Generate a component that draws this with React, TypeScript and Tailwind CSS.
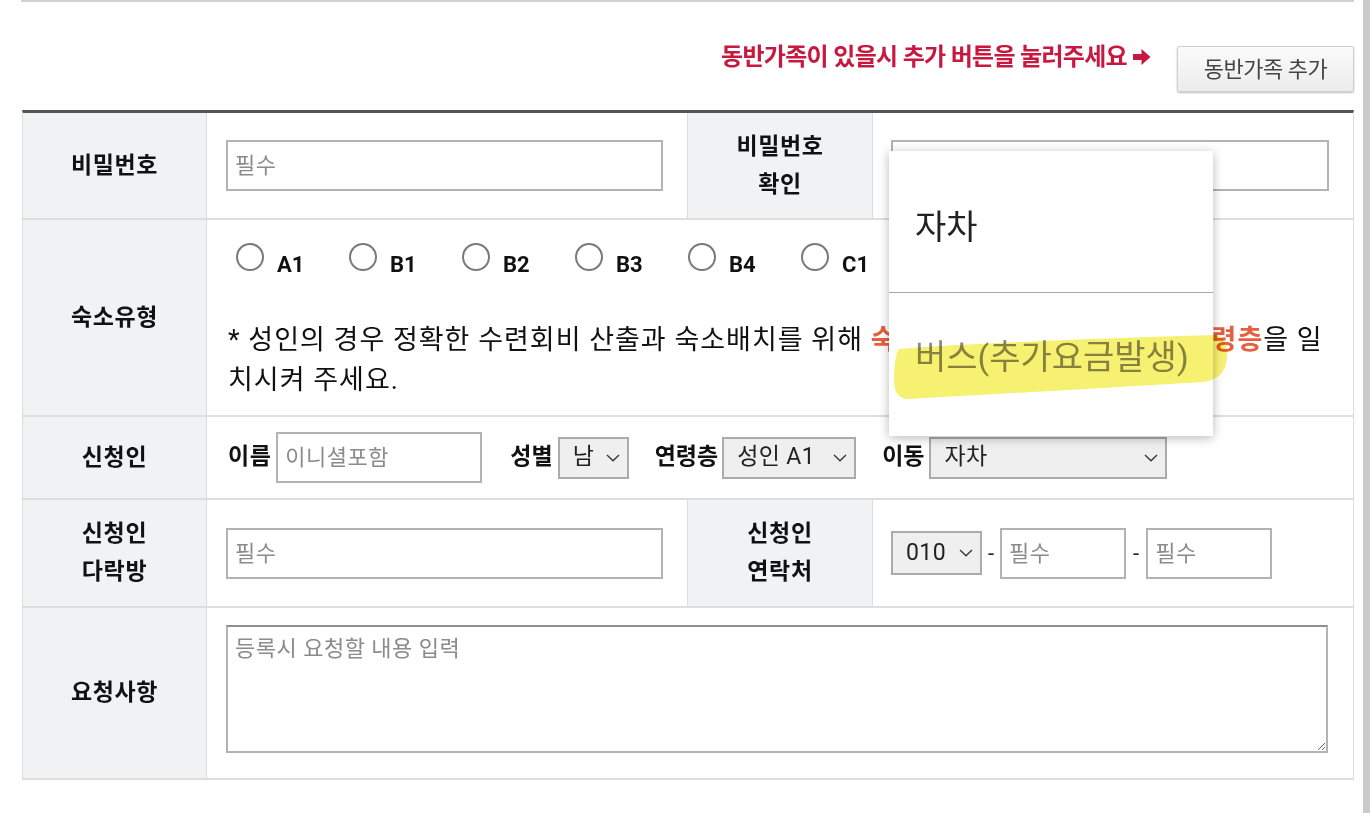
import React from "react"

const font = { fontFamily: "Roboto, 'Noto Sans CJK KR', sans-serif" }

const Chevron = () => (
  <svg width="14" height="8" viewBox="0 0 14 8" className="shrink-0">
    <polyline points="1,1 7,6.8 13,1" fill="none" stroke="#333" strokeWidth="1.3" />
  </svg>
)

const Select = ({ value, className }: { value: string; className: string }) => (
  <div className={`flex items-center justify-between border-2 border-[#ababab] bg-[#efefef] pl-[13px] pr-[7px] text-[23px] tracking-[0.4px] text-[#222] ${className}`}>
    <span>{value}</span>
    <Chevron />
  </div>
)

const Field = ({ placeholder, className }: { placeholder: string; className: string }) => (
  <input
    readOnly
    placeholder={placeholder}
    className={`border-2 border-[#b3b3b3] bg-white px-[7px] text-[22px] tracking-[0.5px] text-[#222] outline-none placeholder:text-[#8b8b8b] ${className}`}
  />
)

const Label = ({ children }: { children: React.ReactNode }) => (
  <div className="flex items-center justify-center border-r border-[#dcdcdc] bg-[#f1f2f4] text-center text-[23px] font-bold leading-[38px] tracking-[0.6px] text-[#111]">
    <div>{children}</div>
  </div>
)

const Radio = ({ label }: { label: string }) => (
  <div className="flex w-[113px] items-end">
    <span className="h-[28px] w-[28px] shrink-0 rounded-full border-2 border-[#7a7a7a] bg-white" />
    <span className="relative top-[5px] ml-[13px] text-[22px] font-bold leading-[22px] text-[#111]">{label}</span>
  </div>
)

export default function App() {
  return (
    <div className="relative flex h-[813px] w-[1370px] overflow-hidden bg-white" style={font}>
      <div className="flex-1">
        <div className="ml-[21px] h-[2px] w-[1333px] bg-[#d2d2d2]" />

        {/* top bar */}
        <div className="ml-[22px] flex h-[108px] w-[1332px] items-start justify-end">
          <div className="mt-[41px] flex items-center text-[24px] font-bold leading-[28px] tracking-[-0.7px] text-[#c8183f]">
            동반가족이 있을시 추가 버튼을 눌러주세요
            <svg width="18" height="18" viewBox="0 0 18 18" className="ml-[6px] shrink-0">
              <path d="M0 6 H8.5 V1 L17.5 9 L8.5 17 V12 H0 Z" fill="#c8183f" />
            </svg>
          </div>
          <button className="ml-[26px] mt-[44px] h-[46px] w-[177px] rounded-[2px] border border-[#cfcfcf] bg-gradient-to-b from-[#fbfbfb] to-[#ececec] text-[22px] tracking-[-0.5px] text-[#444] shadow-[0_1px_2px_rgba(0,0,0,0.25)]">
            동반가족 추가
          </button>
        </div>

        {/* form table */}
        <div className="ml-[22px] w-[1332px] border-t-[3px] border-l border-r border-[#dcdcdc] border-t-[#555]">
          <div className="grid h-[107px] grid-cols-[184px_481px_185px_480px] border-b-2 border-[#dedede]">
            <Label>비밀번호</Label>
            <div className="flex items-center border-r border-[#dcdcdc] pl-[19px]">
              <Field placeholder="필수" className="h-[51px] w-[437px]" />
            </div>
            <Label>
              비밀번호
              <br />
              확인
            </Label>
            <div className="flex items-center pl-[18px]">
              <Field placeholder="" className="h-[51px] w-[438px]" />
            </div>
          </div>

          <div className="grid h-[197px] grid-cols-[184px_1146px] border-b-2 border-[#dedede]">
            <Label>숙소유형</Label>
            <div className="pl-[21px] pr-[20px] pt-[23px]">
              <div className="flex h-[28px] pl-[8px]">
                {["A1", "B1", "B2", "B3", "B4", "C1"].map((r) => (
                  <Radio key={r} label={r} />
                ))}
              </div>
              <p className="mt-[49px] text-[27px] leading-[40px] tracking-[1px] text-[#111]">
                * 성인의 경우 정확한 수련회비 산출과 숙소배치를 위해{" "}
                <span className="font-bold text-[#e5603f]">숙박자 전원의 실제 성별과 연령층</span>을 일치시켜 주세요.
              </p>
            </div>
          </div>

          <div className="grid h-[83px] grid-cols-[184px_1146px] border-b-2 border-[#dedede]">
            <Label>신청인</Label>
            <div className="flex items-center pl-[21px] text-[23px] font-bold text-[#111]">
              <span className="tracking-[0.5px]">이름</span>
              <Field placeholder="이니셜포함" className="ml-[5px] h-[51px] w-[206px] font-normal" />
              <span className="ml-[28px]">성별</span>
              <Select value="남" className="ml-[5px] h-[42px] w-[71px] font-normal" />
              <span className="ml-[26px]">연령층</span>
              <Select value="성인 A1" className="ml-[4px] h-[42px] w-[134px] font-normal" />
              <span className="ml-[26px]">이동</span>
              <Select value="자차" className="ml-[5px] h-[42px] w-[238px] font-normal" />
            </div>
          </div>

          <div className="grid h-[108px] grid-cols-[184px_481px_185px_480px] border-b-2 border-[#dedede]">
            <Label>
              신청인
              <br />
              다락방
            </Label>
            <div className="flex items-center border-r border-[#dcdcdc] pl-[19px]">
              <Field placeholder="필수" className="h-[51px] w-[437px]" />
            </div>
            <Label>
              신청인
              <br />
              연락처
            </Label>
            <div className="flex items-center pl-[18px] text-[22px] text-[#222]">
              <Select value="010" className="h-[44px] w-[91px]" />
              <span className="mx-[6px]">-</span>
              <Field placeholder="필수" className="h-[51px] w-[126px]" />
              <span className="mx-[7px]">-</span>
              <Field placeholder="필수" className="h-[51px] w-[126px]" />
            </div>
          </div>

          <div className="grid h-[172px] grid-cols-[184px_1146px] border-b-2 border-[#dedede]">
            <Label>요청사항</Label>
            <div className="pl-[19px] pt-[17px]">
              <textarea
                readOnly
                placeholder="등록시 요청할 내용 입력"
                className="h-[128px] w-[1102px] resize border-2 border-[#b3b3b3] border-t-[#8f8f8f] px-[7px] py-[8px] text-[22px] leading-[28px] tracking-[0.5px] outline-none placeholder:text-[#8b8b8b]"
              />
            </div>
          </div>
        </div>
      </div>
      <div className="w-[7px] bg-[#cbcbcb]" />

      {/* open select list */}
      <div className="absolute left-[889px] top-[151px] h-[285px] w-[324px] bg-white shadow-[0_2px_10px_rgba(0,0,0,0.28)]">
        <div className="flex h-[142px] items-center border-b border-[#a8a8a8] pl-[26px] pt-[12px] text-[34px] text-[#222]">
          자차
        </div>
        <div className="flex h-[128px] items-center pl-[26px] text-[34px] text-[#8a8a8a]">
          버스(추가요금발생)
        </div>
      </div>

      {/* highlighter mark */}
      <svg
        className="pointer-events-none absolute left-[885px] top-[327px] mix-blend-multiply"
        width="350"
        height="80"
        viewBox="0 0 350 80"
      >
        <path
          d="M14 22 Q120 14 330 8 Q343 10 342 30 Q341 52 318 55 Q170 64 22 72 Q8 71 9 50 Q10 26 14 22 Z"
          fill="#f6ef62"
          opacity="0.9"
        />
      </svg>
    </div>
  )
}
